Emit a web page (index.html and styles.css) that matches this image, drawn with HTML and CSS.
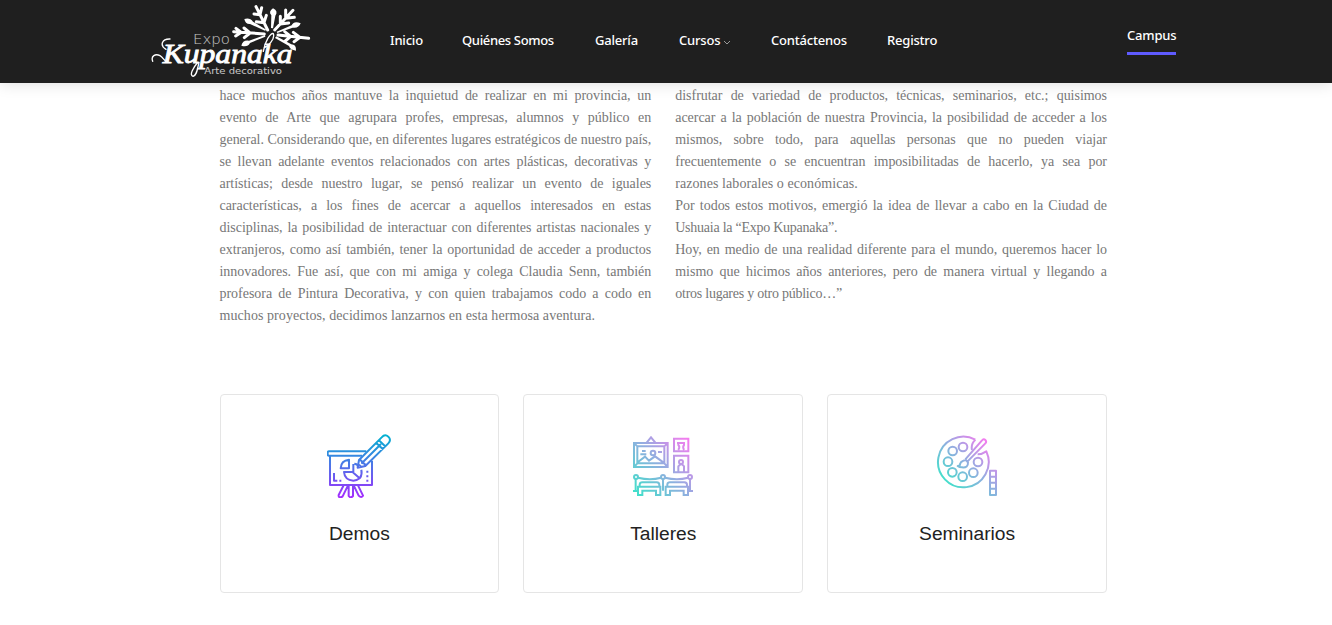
FILE: index.html
```html
<!DOCTYPE html>
<html lang="es">
<head>
<meta charset="utf-8">
<title>Expo Kupanaka</title>
<link rel="stylesheet" href="styles.css">
</head>
<body>
<header class="header">
  <a class="logo"><svg width="180" height="83" viewBox="0 0 540 249" fill="none" stroke="#fff" stroke-linecap="round">
    <g stroke-width="9">
      <path d="M383 90L348 20M360 44l-18-2M360 44l5-21M372 68l-23-3M372 68l7-22"/>
      <path d="M404 90L459 31M437 55l0-25M437 55l26-3M421 72l0-23M421 72l25-3"/>
      <path d="M414 105L506 115M480 112l-20-15M480 112l-18 13M452 109l-18-14M452 109l-16 14"/>
      <path d="M373 102L281 95M304 97l-16-12M304 97l-17 11M330 99l-18-15M330 99l-17 14"/>
    </g>
    <g fill="#fff" stroke="none">
      <path d="M393 84l1-38q-10-10 5-21q17 9 7 22l-7 38z"/>
      <path d="M375 92l-45-20q-14 1-17-15q17-5 26 8l40 24z"/>
      <path d="M410 95l45-19q7-15 27-6q-6 16-24 13l-46 16z"/>
      <path d="M376 110l-46 19q-7 14-26 8q4-18 23-15l48-17z"/>
      <path d="M409 109l45 24q15 0 14 19q-18-2-21-14l-42-24z"/>
    </g>
    <path stroke-width="4" d="M38 184c-6-16 8-24 22-17 11 6 13 18 23 19M78 148c-20-12-12-32 12-31M177 187c-5 20-6 39-18 42-12-4 0-25 15-43M370 154c4-28 22-58 30-53 6 17-17 39-28 43"/>
    <text class="logo-expo" x="159" y="131" textLength="111" lengthAdjust="spacingAndGlyphs">Expo</text>
    <text class="logo-name" x="68" y="189" textLength="390" lengthAdjust="spacingAndGlyphs">Kupanaka</text>
    <text class="logo-sub" x="193" y="223" textLength="233" lengthAdjust="spacingAndGlyphs">Arte decorativo</text>
  </svg></a>
  <nav class="nav">
    <a>Inicio</a><a class="tight">Quiénes Somos</a><a>Galería</a>
    <a>Cursos<svg class="caret" width="8" height="5" viewBox="0 0 8 5"><path d="M1 1l3 3 3-3" fill="none" stroke="#999"/></svg></a>
    <a>Contáctenos</a><a>Registro</a>
  </nav>
  <a class="campus">Campus</a>
</header>
<main class="main">
  <section class="columns">
    <div class="column">
      <p>hace muchos años mantuve la inquietud de realizar en mi provincia, un</p>
      <p>evento de Arte que agrupara profes, empresas, alumnos y público en</p>
      <p>general. Considerando que, en diferentes lugares estratégicos de nuestro país,</p>
      <p>se llevan adelante eventos relacionados con artes plásticas, decorativas y</p>
      <p>artísticas; desde nuestro lugar, se pensó realizar un evento de iguales</p>
      <p>características, a los fines de acercar a aquellos interesados en estas</p>
      <p>disciplinas, la posibilidad de interactuar con diferentes artistas nacionales y</p>
      <p>extranjeros, como así también, tener la oportunidad de acceder a productos</p>
      <p>innovadores. Fue así, que con mi amiga y colega Claudia Senn, también</p>
      <p>profesora de Pintura Decorativa, y con quien trabajamos codo a codo en</p>
      <p class="end">muchos proyectos, decidimos lanzarnos en esta hermosa aventura.</p>
    </div>
    <div class="column">
      <p>disfrutar de variedad de productos, técnicas, seminarios, etc.; quisimos</p>
      <p>acercar a la población de nuestra Provincia, la posibilidad de acceder a los</p>
      <p>mismos, sobre todo, para aquellas personas que no pueden viajar</p>
      <p>frecuentemente o se encuentran imposibilitadas de hacerlo, ya sea por</p>
      <p class="end">razones laborales o económicas.</p>
      <p>Por todos estos motivos, emergió la idea de llevar a cabo en la Ciudad de</p>
      <p class="end narrow">Ushuaia la “Expo Kupanaka”.</p>
      <p>Hoy, en medio de una realidad diferente para el mundo, queremos hacer lo</p>
      <p>mismo que hicimos años anteriores, pero de manera virtual y llegando a</p>
      <p class="end narrow">otros lugares y otro público…”</p>
    </div>
  </section>
  <section class="cards">
    <article class="card">
      <svg class="icon" viewBox="36 27 192 192">
        <defs><linearGradient id="g1" gradientUnits="userSpaceOnUse" x1="0" y1="27" x2="0" y2="219"><stop offset="0" stop-color="#00b4d0"/><stop offset=".5" stop-color="#4f73e8"/><stop offset="1" stop-color="#a52bff"/></linearGradient></defs>
        <g fill="none" stroke="url(#g1)" stroke-width="6" stroke-linejoin="round">
          <path d="M154 79H42q-4 0-4 5v3q0 5 4 5h99M45 92v88h126v-73"/>
          <path d="M128 128l4-23 68-68q10-11 20-2 10 10 0 20l-69 68-23 5zM132 105q10 0 9 9 10 0 10 9M141 114l57-57M183 53l21 20M191 45l21 20M132 119l6 6"/>
          <path d="M102 104v26H77q1-24 25-26zM115 117v26l19 17q-9 7-19 7-26-2-28-26h28M118 116q10 0 12 10M139 134q3 14-4 25"/>
          <path d="M57 144v23h10M73 167h6M154 140h6M154 154h6M154 167h6"/>
          <path d="M86 181l-15 29q-1 7 5 7t8-5l15-31M101 181v32q6 8 13 0v-32M116 181l15 31q8 8 13 0l-15-31"/>
        </g>
      </svg>
      <h3>Demos</h3>
    </article>
    <article class="card">
      <svg class="icon" viewBox="33 27 192 192">
        <defs><linearGradient id="g2" gradientUnits="userSpaceOnUse" x1="40" y1="195" x2="205" y2="45"><stop offset="0" stop-color="#43dfcb"/><stop offset=".5" stop-color="#91aee0"/><stop offset="1" stop-color="#f47cef"/></linearGradient></defs>
        <g fill="none" stroke="url(#g2)" stroke-width="6">
          <path d="M42 54h101v72H42zM52 64h81v51H52zM42 54l10 10M143 54l-10 10M42 126l10-11M143 126l-10-11M80 53l13-16 13 16M54 111l21-16 12 12 18-13 25 18M66 78h11M61 88h18M114 81h12"/><circle cx="99" cy="84" r="7"/>
          <path d="M162 41h43v38h-43zM171 54h24M175 54v6q6 5 0 15M192 54v6q-5 5 0 15M162 92h43v50h-43zM175 137v-13q9-13 17 0v13M172 137h6M189 137h6"/><circle cx="183" cy="111" r="6"/>
          <circle cx="48" cy="156" r="6"/><circle cx="129" cy="156" r="6"/><circle cx="210" cy="156" r="6"/>
          <path d="M54 158q37 9 69 0M135 158q37 9 69 0M47 162v35M129 162v35M210 162v35M39 198h14M204 198h15"/>
          <path d="M54 185v25h13v-13h41v13h13v-25zM59 185v-7q1-6 8-6h43q8 1 8 7v6M137 185v25h13v-13h41v13h13v-25zM142 185v-7q1-6 8-6h43q8 1 8 7v6"/>
        </g>
      </svg>
      <h3>Talleres</h3>
    </article>
    <article class="card">
      <svg class="icon" viewBox="30 27 192 192">
        <defs><linearGradient id="g3" gradientUnits="userSpaceOnUse" x1="60" y1="170" x2="182" y2="45"><stop offset="0" stop-color="#43dfcb"/><stop offset=".5" stop-color="#91aee0"/><stop offset="1" stop-color="#f47cef"/></linearGradient></defs>
        <g fill="none" stroke="url(#g3)" stroke-width="6" stroke-linejoin="round">
          <path d="M151 44A76 76 0 1 0 184 79q-13 9-26 9M151 44q-14 13-10 31"/>
          <circle cx="114" cy="66" r="13"/><circle cx="83" cy="78" r="13"/><circle cx="69" cy="110" r="13"/><circle cx="82" cy="142" r="13"/><circle cx="113" cy="155" r="13"/><circle cx="145" cy="143" r="13"/><circle cx="159" cy="111" r="13"/>
          <path d="M121 103l50-57q5-6 10-1t0 10l-54 55M115 107q11-4 14 5 1 17-18 15-8 0-13-4 9-2 7-6 2-8 10-10zM121 103l7 8M97 123h10"/>
          <path d="M195 137h18v73h-18zM195 155h18M195 173h18M195 191h18"/>
        </g>
      </svg>
      <h3>Seminarios</h3>
    </article>
  </section>
</main>
</body>
</html>
```
FILE: styles.css
```css
* { box-sizing: border-box; }
body { margin: 0; height: 625px; overflow: hidden; background: #fff; }
.header {
  display: flex;
  height: 83px;
  padding-left: 140px;
  background: #1f1f1f;
  box-shadow: 0 0 15px rgba(0, 0, 0, .15);
  color: #fff;
  font: 500 13px/20px "Noto Sans", sans-serif;
  letter-spacing: -.2px;
}
.logo { width: 250px; letter-spacing: 0; }
.logo svg { display: block; }
.logo text { fill: #fff; stroke: none; }
.logo-expo { font: 200 44px "DejaVu Sans", sans-serif; opacity: .75; }
.logo .logo-name { font: italic 80px "Liberation Serif", serif; stroke: #fff; stroke-width: 2.5px; }
.logo-sub { font: 24px "DejaVu Sans", sans-serif; opacity: .75; }
.nav {
  display: grid;
  grid-template-columns: 72px 133px 84px 92px 116px 60px;
  width: 737px;
  padding-top: 30px;
  white-space: nowrap;
}
.tight { letter-spacing: -.35px; }
.caret { margin-left: 3px; }
.campus {
  align-self: flex-start;
  width: 49px;
  height: 30px;
  margin-top: 25px;
  border-bottom: 3px solid #5f5bff;
  white-space: nowrap;
}
.main { width: 887.5px; margin-left: 219.5px; padding-top: 2px; }
.columns {
  display: grid;
  grid-template-columns: repeat(2, minmax(0, 1fr));
  gap: 24px;
  height: 309px;
  color: #777;
  font: 14px/22px "Liberation Serif", serif;
  letter-spacing: -.03px;
}
.column p { margin: 0; text-align: justify; text-align-last: justify; white-space: nowrap; }
.column .end { text-align-last: left; letter-spacing: .07px; }
.column .narrow { letter-spacing: -.25px; }
.cards { display: grid; grid-template-columns: repeat(3, 1fr); gap: 24px; }
.card {
  display: flex;
  flex-direction: column;
  align-items: center;
  height: 199px;
  padding-top: 39px;
  border: 1px solid #e5e5e5;
  border-radius: 4px;
}
.icon { width: 64px; height: 64px; }
.card h3 {
  margin: 24px 0 0;
  color: #222;
  font: 400 19.2px/24px "Liberation Sans", sans-serif;
}
```
